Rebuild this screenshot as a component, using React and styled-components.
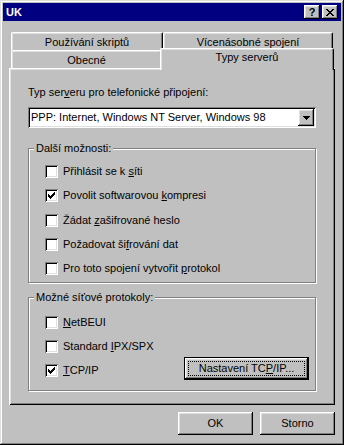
import styled, { createGlobalStyle } from "styled-components"

const GlobalStyle = createGlobalStyle`
  html, body { margin: 0; padding: 0; background: #c0c0c0; }
  body { font-family: "Liberation Sans", Arial, sans-serif; font-size: 11px; color: #000; }
  u { text-underline-offset: 1px; }
`

const raised = `
  box-shadow: inset -1px -1px #000, inset 1px 1px #fff, inset -2px -2px #808080, inset 2px 2px #dfdfdf;
`
const sunken = `
  box-shadow: inset 1px 1px #808080, inset -1px -1px #fff, inset 2px 2px #000, inset -2px -2px #dfdfdf;
`

const Window = styled.div`
  width: 344px;
  height: 445px;
  box-sizing: border-box;
  padding: 3px;
  background: #c0c0c0;
  box-shadow: inset -1px -1px #000, inset 1px 1px #dfdfdf, inset -2px -2px #808080, inset 2px 2px #fff;
  display: flex;
  flex-direction: column;
`

const TitleBar = styled.div`
  height: 18px;
  background: #000080;
  color: #fff;
  font-weight: bold;
  display: flex;
  align-items: center;
  justify-content: space-between;
  padding: 0 3px 0 3px;
`

const TitleButtons = styled.div`
  display: flex;
  gap: 2px;
`

const CapButton = styled.div`
  width: 16px;
  height: 14px;
  box-sizing: border-box;
  background: #c0c0c0;
  ${raised}
  display: flex;
  align-items: center;
  justify-content: center;
  color: #000;
  font-weight: bold;
  font-size: 11px;
  line-height: 14px;
`

const Body = styled.div`
  padding: 11px 6px 0 6px;
  display: flex;
  flex-direction: column;
`

const TabStrip = styled.div`
  display: flex;
  flex-direction: column;
  padding-left: 2px;
`

const TabRow = styled.div`
  display: flex;
  height: 18px;
`

const Tab = styled.div`
  width: ${p => p.$w}px;
  height: ${p => (p.$active ? 22 : 18)}px;
  margin-top: ${p => (p.$active ? -2 : 0)}px;
  margin-left: ${p => (p.$active ? -2 : 0)}px;
  box-sizing: border-box;
  background: #c0c0c0;
  border-top: 1px solid #fff;
  border-left: 1px solid #fff;
  border-right: 1px solid #000;
  border-radius: 2px 2px 0 0;
  box-shadow: inset -1px 0 #808080, inset 1px 1px #dfdfdf;
  position: relative;
  z-index: ${p => (p.$active ? 1 : 0)};
  text-align: center;
  line-height: 16px;
  padding-top: ${p => (p.$active ? 0 : 1)}px;
`

const Panel = styled.div`
  height: 337px;
  box-sizing: border-box;
  box-shadow: inset 1px 1px #fff, inset -1px -1px #000, inset 2px 2px #dfdfdf, inset -2px -2px #808080;
  padding: 18px 19px 0 19px;
  display: flex;
  flex-direction: column;
`

const Label = styled.div`
  line-height: 13px;
`

const Combo = styled.div`
  margin-top: 8px;
  height: 21px;
  box-sizing: border-box;
  background: #fff;
  ${sunken}
  display: flex;
  align-items: center;
  padding: 2px;
`

const ComboText = styled.div`
  flex: 1;
  padding-left: 1px;
  line-height: 13px;
`

const ArrowButton = styled.div`
  width: 16px;
  height: 17px;
  box-sizing: border-box;
  background: #c0c0c0;
  ${raised}
  display: flex;
  align-items: center;
  justify-content: center;
`

const Group = styled.div`
  margin-top: ${p => p.$top}px;
  height: ${p => p.$h}px;
  box-sizing: border-box;
  border: 1px solid #808080;
  box-shadow: inset 1px 1px #fff, 1px 1px #fff;
  padding: 0 6px 0 16px;
  display: flex;
  flex-direction: column;
`

const Legend = styled.div`
  align-self: flex-start;
  margin: -7px 0 0 -11px;
  padding: 0 2px;
  background: #c0c0c0;
  line-height: 13px;
`

const CheckList = styled.div`
  margin-top: ${p => p.$top}px;
  display: flex;
  flex-direction: column;
  gap: ${p => p.$gap}px;
`

const CheckRow = styled.div`
  display: flex;
  align-items: center;
  justify-content: space-between;
  height: 13px;
`

const CheckLabel = styled.label`
  display: flex;
  align-items: center;
  gap: 5px;
  line-height: 13px;
`

const Box = styled.span`
  width: 13px;
  height: 13px;
  box-sizing: border-box;
  background: #fff;
  ${sunken}
  display: flex;
  align-items: center;
  justify-content: center;
`

const Button = styled.div`
  width: ${p => p.$w}px;
  height: 23px;
  box-sizing: border-box;
  background: #c0c0c0;
  ${raised}
  display: flex;
  align-items: center;
  justify-content: center;
  line-height: 13px;
`

const DefaultButton = styled(Button)`
  margin-top: -4px;
  border: 1px solid #000;
  padding: 3px;
`

const Focus = styled.span`
  flex: 1;
  align-self: stretch;
  border: 1px dotted #000;
  display: flex;
  align-items: center;
  justify-content: center;
`

const Footer = styled.div`
  margin-top: 7px;
  display: flex;
  justify-content: flex-end;
  gap: 7px;
`

const CHECK = [
  "......#",
  ".....##",
  "#...###",
  "##.###.",
  "#####..",
  ".###...",
  "..#....",
]

const CheckMark = () => (
  <svg width="7" height="7" viewBox="0 0 7 7" shapeRendering="crispEdges">
    {CHECK.flatMap((row, y) =>
      row.split("").map((c, x) => (c === "#" ? <rect key={`${x}-${y}`} x={x} y={y} width="1" height="1" fill="#000" /> : null))
    )}
  </svg>
)

const Checkbox = ({ checked, children }) => (
  <CheckLabel>
    <Box>{checked && <CheckMark />}</Box>
    <span>{children}</span>
  </CheckLabel>
)

const options = [
  { checked: false, label: <>Přihlásit se k <u>s</u>íti</> },
  { checked: true, label: <>Povolit softwarovou <u>k</u>ompresi</> },
  { checked: false, label: <>Žádat <u>z</u>ašifrované heslo</> },
  { checked: false, label: <>Požadovat ši<u>f</u>rování dat</> },
  { checked: false, label: <>Pro toto spojení vytvořit <u>p</u>rotokol</> },
]

export default function App() {
  return (
    <>
      <GlobalStyle />
      <Window>
        <TitleBar>
          <span>UK</span>
          <TitleButtons>
            <CapButton>?</CapButton>
            <CapButton>
              <svg width="8" height="7" viewBox="0 0 8 7" shapeRendering="crispEdges">
                <path d="M0 0h2v1h-2zM6 0h2v1h-2zM1 1h2v1h-2zM5 1h2v1h-2zM2 2h4v1h-4zM3 3h2v1h-2zM2 4h4v1h-4zM1 5h2v1h-2zM5 5h2v1h-2zM0 6h2v1h-2zM6 6h2v1h-2z" fill="#000" />
              </svg>
            </CapButton>
          </TitleButtons>
        </TitleBar>
        <Body>
          <TabStrip>
            <TabRow>
              <Tab $w={152}>Používání skriptů</Tab>
              <Tab $w={170}>Vícenásobné spojení</Tab>
            </TabRow>
            <TabRow>
              <Tab $w={151}>Obecné</Tab>
              <Tab $w={174} $active>Typy serverů</Tab>
            </TabRow>
          </TabStrip>
          <Panel>
            <Label>Typ ser<u>v</u>eru pro telefonické připojení:</Label>
            <Combo>
              <ComboText>PPP: Internet, Windows NT Server, Windows 98</ComboText>
              <ArrowButton>
                <svg width="7" height="4" viewBox="0 0 7 4" shapeRendering="crispEdges">
                  <path d="M0 0h7v1h-7zM1 1h5v1h-5zM2 2h3v1h-3zM3 3h1v1h-1z" fill="#000" />
                </svg>
              </ArrowButton>
            </Combo>
            <Group $top={20} $h={135}>
              <Legend>Další možnosti:</Legend>
              <CheckList $top={10} $gap={11.25}>
                {options.map((o, i) => (
                  <CheckRow key={i}>
                    <Checkbox checked={o.checked}>{o.label}</Checkbox>
                  </CheckRow>
                ))}
              </CheckList>
            </Group>
            <Group $top={14} $h={94}>
              <Legend>Možné síťové protokoly:</Legend>
              <CheckList $top={12} $gap={11}>
                <CheckRow>
                  <Checkbox><u>N</u>etBEUI</Checkbox>
                </CheckRow>
                <CheckRow>
                  <Checkbox>Standard <u>I</u>PX/SPX</Checkbox>
                </CheckRow>
                <CheckRow>
                  <Checkbox checked><u>T</u>CP/IP</Checkbox>
                  <DefaultButton $w={125}>
                    <Focus>Nastavení TC<u>P</u>/IP...</Focus>
                  </DefaultButton>
                </CheckRow>
              </CheckList>
            </Group>
          </Panel>
          <Footer>
            <Button $w={75}>OK</Button>
            <Button $w={75}>Storno</Button>
          </Footer>
        </Body>
      </Window>
    </>
  )
}
